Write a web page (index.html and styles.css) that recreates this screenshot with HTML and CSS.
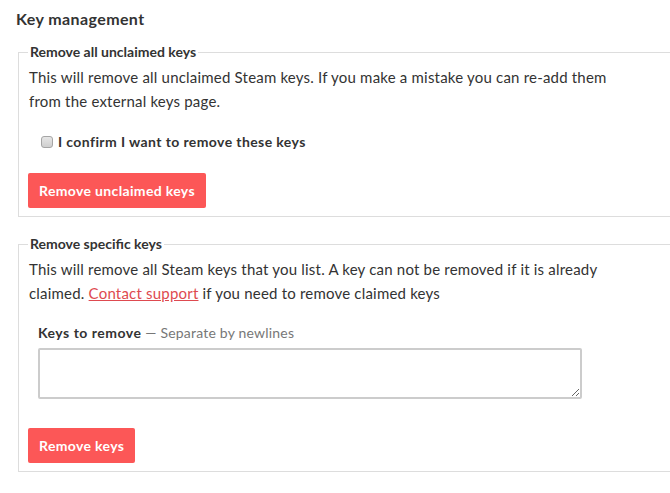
FILE: index.html
```html
<!DOCTYPE html>
<html>
	<head>
		<meta charset="utf-8" />
		<title>Key management</title>
		<link rel="stylesheet" href="styles.css">
	</head>
	<body>
		<div class="page">
			<h3 class="title">Key management</h3>

			<fieldset class="box">
				<legend>Remove all unclaimed keys</legend>
				<p class="desc">This will remove all unclaimed Steam keys. If you make a mistake you can re-add them from the external keys page.</p>
				<label class="check">
					<input type="checkbox">
					<span>I confirm I want to remove these keys</span>
				</label>
				<button class="btn" type="button">Remove unclaimed keys</button>
			</fieldset>

			<fieldset class="box">
				<legend>Remove specific keys</legend>
				<p class="desc">This will remove all Steam keys that you list. A key can not be removed if it is already claimed. <a href="javascript:;">Contact support</a> if you need to remove claimed keys</p>
				<div class="field">
					<label class="field-label">Keys to remove <span class="hint">&mdash; Separate by newlines</span></label>
					<textarea class="keys"></textarea>
				</div>
				<button class="btn" type="button">Remove keys</button>
			</fieldset>
		</div>
	</body>
</html>
```

FILE: styles.css
```css
* {
	box-sizing: border-box;
}

html,
body {
	margin: 0;
	overflow: hidden;
}

body {
	font-family: Lato, "Open Sans", sans-serif;
	color: #333;
	background: #fff;
}

/* the boxes run a little past the window on the right */
.page {
	width: 680px;
	padding: 9px 0 0 16px;
}

.title {
	margin: 0 0 13px;
	font-size: 16px;
	line-height: 20px;
	font-weight: bold;
	letter-spacing: 0.4px;
}

.box {
	margin: 0 0 17px 2px;
	padding: 0 9px 8px;
	border: 1px solid #ddd;
}

.box legend {
	padding: 0 2px;
	font-size: 14px;
	line-height: 20px;
	font-weight: bold;
}

.desc {
	margin: 3px 0 0 1px;
	width: 600px;
	font-size: 15px;
	line-height: 24px;
	letter-spacing: 0.2px;
}

.desc a {
	color: #de4a50;
	text-decoration: underline;
}

.check {
	display: flex;
	align-items: center;
	gap: 5px;
	margin: 19px 0 21px 13px;
	font-size: 14px;
	line-height: 20px;
	font-weight: bold;
	letter-spacing: 0.4px;
}

/* grey rounded box like the desktop theme */
.check input {
	-webkit-appearance: none;
	appearance: none;
	margin: 0;
	width: 12px;
	height: 12px;
	border: 1px solid #a5a5a5;
	border-radius: 3px;
	background: linear-gradient(#e6e6e6, #cfcfcf);
}

.btn {
	display: block;
	height: 35px;
	padding: 0 11px;
	border: 0;
	border-radius: 2px;
	background: #fc5757;
	color: #fff;
	font-family: inherit;
	font-size: 14px;
	font-weight: bold;
	letter-spacing: 0.35px;
	cursor: pointer;
}

.field {
	margin: 19px 0 29px 10px;
}

.field-label {
	display: block;
	font-size: 14px;
	line-height: 18px;
	font-weight: bold;
	letter-spacing: 0.5px;
}

.hint {
	font-weight: normal;
	color: #777;
	letter-spacing: 0.2px;
}

.keys {
	display: block;
	width: 544px;
	height: 51px;
	margin-top: 6px;
	border: 2px solid #ccc;
	border-radius: 2px;
	resize: vertical;
}
```
